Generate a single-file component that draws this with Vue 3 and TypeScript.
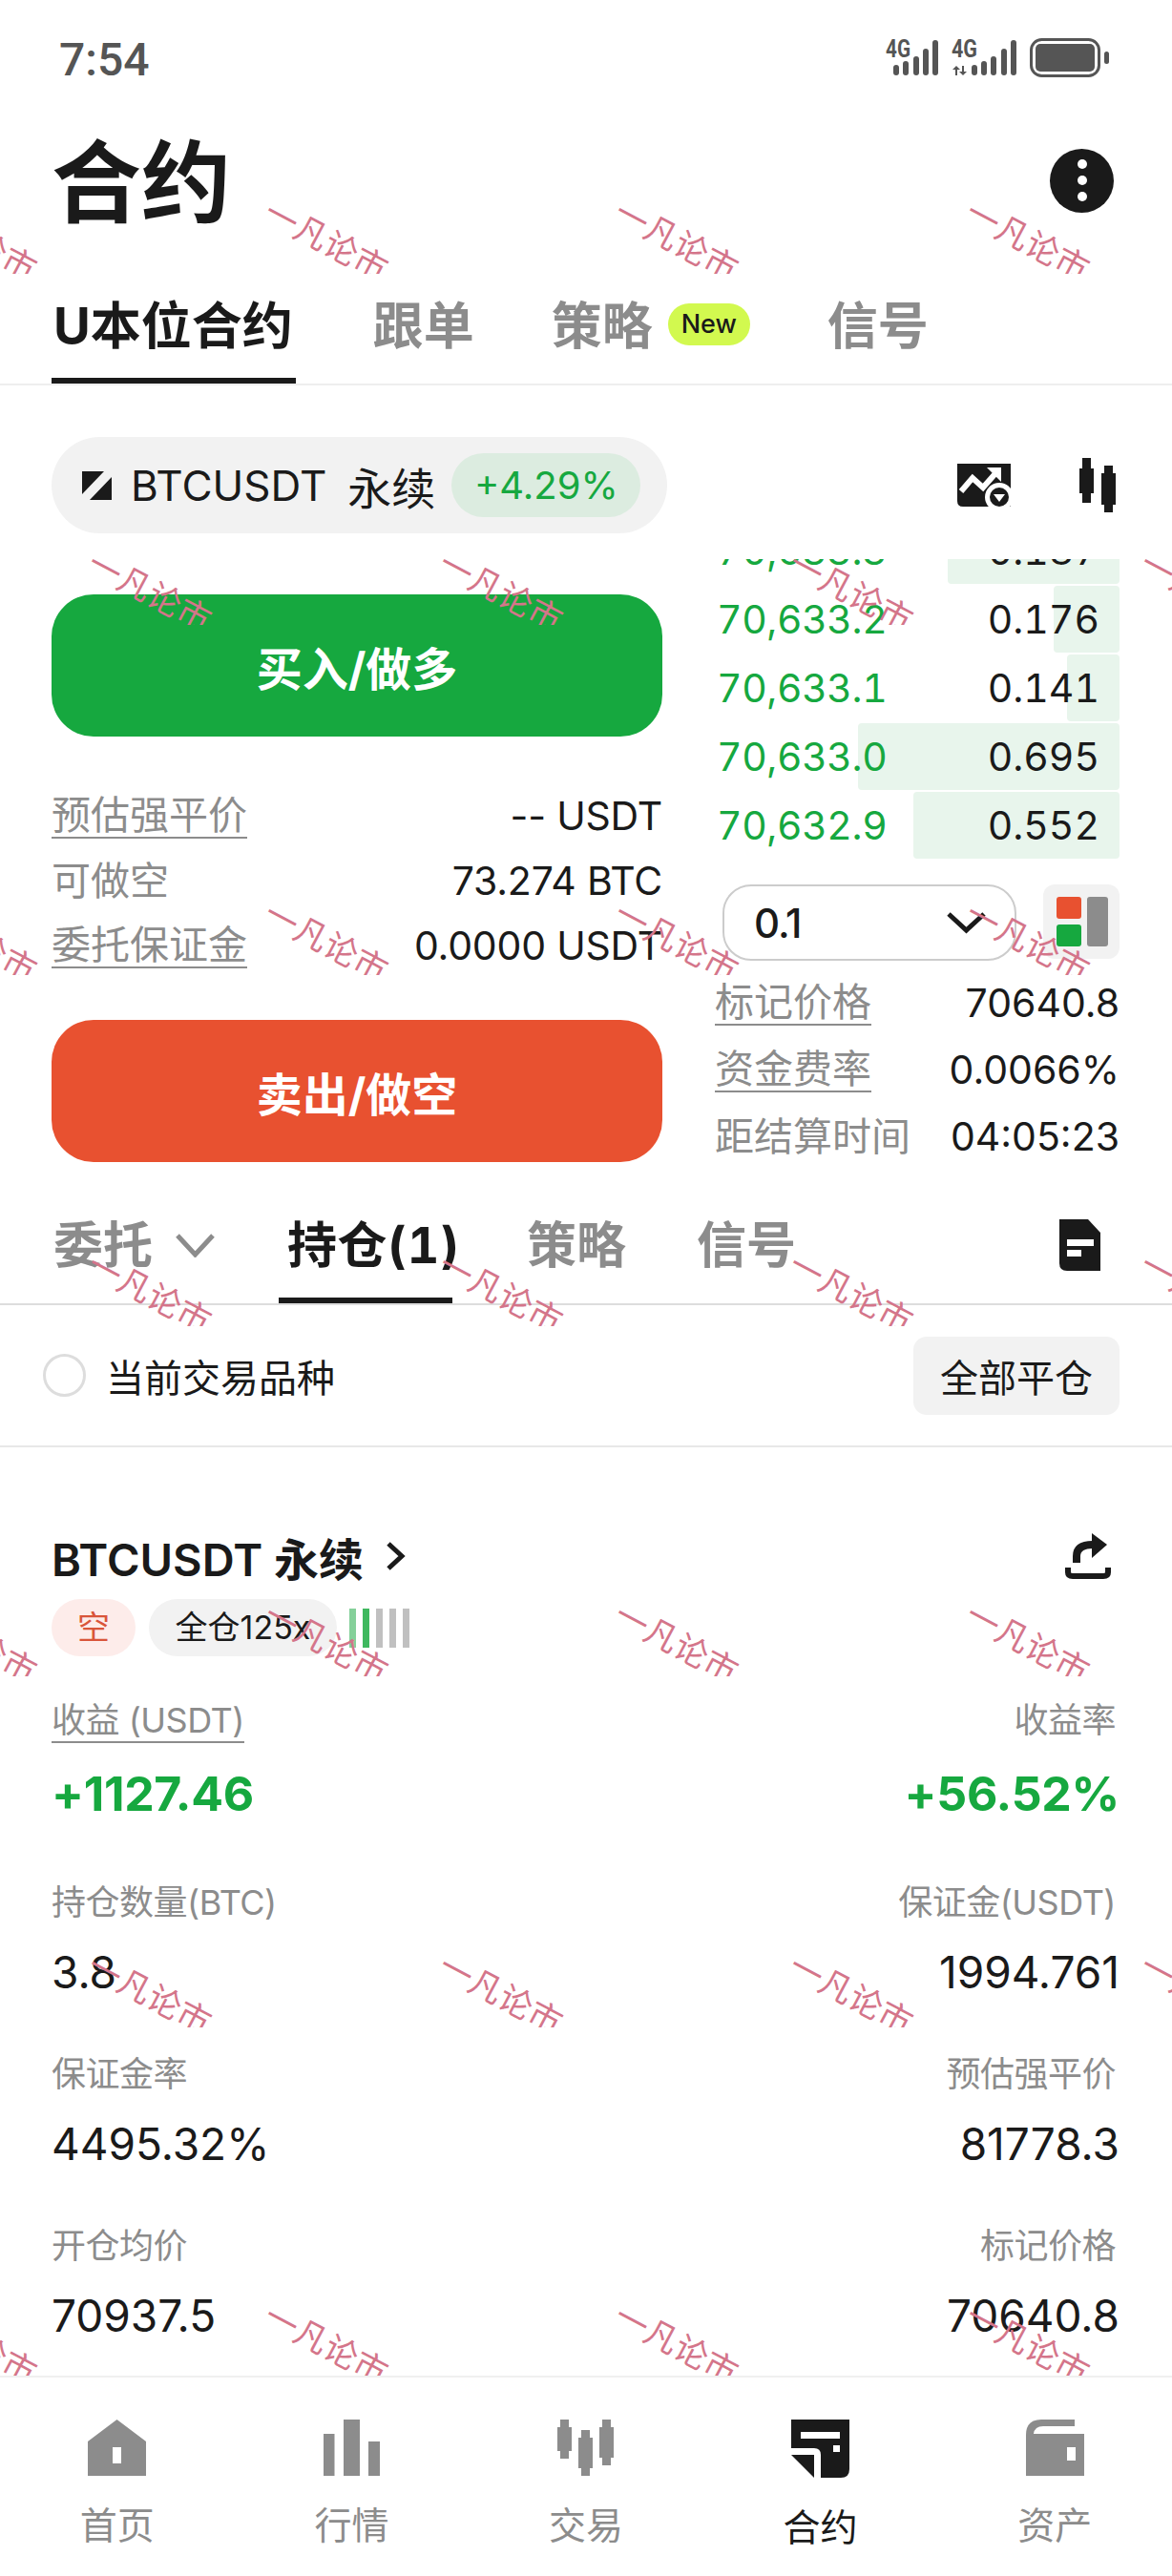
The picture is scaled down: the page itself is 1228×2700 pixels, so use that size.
<script setup lang="ts">
const topTabs = ['跟单']

const book = [
  { price: '70,633.3', qty: '0.187', bar: 180 },
  { price: '70,633.2', qty: '0.176', bar: 69 },
  { price: '70,633.1', qty: '0.141', bar: 55 },
  { price: '70,633.0', qty: '0.695', bar: 274 },
  { price: '70,632.9', qty: '0.552', bar: 216 },
]

const market = [
  { label: '标记价格', value: '70640.8', dotted: true },
  { label: '资金费率', value: '0.0066%', dotted: true },
  { label: '距结算时间', value: '04:05:23', dotted: false },
]

const stats = [
  { left: '持仓数量(BTC)', leftValue: '3.8', right: '保证金(USDT)', rightValue: '1994.761' },
  { left: '保证金率', leftValue: '4495.32%', right: '预估强平价', rightValue: '81778.3' },
  { left: '开仓均价', leftValue: '70937.5', right: '标记价格', rightValue: '70640.8' },
]

const riskBars = ['#85d09a', '#3fb85f', '#c0c0c0', '#c0c0c0', '#c0c0c0']

const navItems = [
  { label: '首页', icon: 'home', active: false },
  { label: '行情', icon: 'market', active: false },
  { label: '交易', icon: 'trade', active: false },
  { label: '合约', icon: 'contract', active: true },
  { label: '资产', icon: 'wallet', active: false },
]

// repeating watermark, every other row is shifted sideways
const marks: { left: number; top: number }[] = []
for (let row = 0; row < 7; row++) {
  const startX = row % 2 === 0 ? -89 : 94
  for (let col = 0; col < 4; col++) {
    marks.push({ left: startX + col * 367.5, top: 218 + row * 367.5 })
  }
}
</script>

<template>
  <div class="page">
    <header class="status">
      <span class="time">7:54</span>
      <svg class="status-icons" viewBox="928 40 234 41" width="234" height="41">
        <g fill="#555">
          <text x="928" y="60" class="net" textLength="26" lengthAdjust="spacingAndGlyphs">4G</text>
          <rect x="936" y="68" width="6" height="11" rx="3" />
          <rect x="946" y="64" width="6" height="15" rx="3" />
          <rect x="957" y="59" width="6" height="20" rx="3" />
          <rect x="967" y="51" width="6" height="28" rx="3" />
          <rect x="977" y="42" width="6" height="37" rx="3" />
          <text x="997" y="60" class="net" textLength="27" lengthAdjust="spacingAndGlyphs">4G</text>
          <path d="M1002 69l-4 4h3v6h2v-6h3zM1009 79l4-4h-3v-6h-2v6h-3z" />
          <rect x="1018" y="68" width="6" height="11" rx="3" />
          <rect x="1028" y="64" width="6" height="15" rx="3" />
          <rect x="1038" y="59" width="6" height="20" rx="3" />
          <rect x="1049" y="51" width="6" height="28" rx="3" />
          <rect x="1059" y="42" width="6" height="37" rx="3" />
          <rect x="1080.5" y="41.5" width="71" height="38" rx="11" fill="none" stroke="#555" stroke-width="3" />
          <rect x="1085" y="46" width="62" height="29" rx="5" />
          <rect x="1157" y="54" width="5" height="13" rx="2.5" />
        </g>
      </svg>
    </header>

    <div class="title-row">
      <h1 class="title">合约</h1>
      <div class="more"><i></i><i></i><i></i></div>
    </div>

    <nav class="tabs top-tabs">
      <div class="tab active first">U本位合约</div>
      <div v-for="t in topTabs" :key="t" class="tab">{{ t }}</div>
      <div class="tab with-badge">策略<span class="new">New</span></div>
      <div class="tab">信号</div>
    </nav>

    <section class="symbol-row">
      <div class="symbol">
        <svg class="logo" viewBox="0 0 31 30" width="31" height="30">
          <path d="M0 0H23L0 24ZM31 6V30H8Z" fill="#1a1a1a" />
        </svg>
        <span class="sym-name">BTCUSDT</span>
        <span class="sym-kind">永续</span>
        <span class="change">+4.29%</span>
      </div>
      <div class="symbol-tools">
        <svg viewBox="0 0 56 45" width="56" height="45">
          <path d="M0 0H56V45H6Q0 45 0 39Z" fill="#1a1a1a" />
          <path d="M4 29L16 15L27 25L42 8" fill="none" stroke="#fff" stroke-width="6" />
          <path d="M31 4H46V19Z" fill="#fff" />
          <circle cx="44" cy="35" r="15" fill="#fff" />
          <circle cx="44" cy="35" r="10" fill="#1a1a1a" />
          <path d="M38 32H50L44 40Z" fill="#fff" />
        </svg>
        <svg viewBox="0 0 38 57" width="38" height="57">
          <path d="M3 0H12V11H15V37H12V47H3V37H0V11H3ZM26 8H35V16H38V49H35V57H26V49H23V16H26Z" fill="#1a1a1a" />
        </svg>
      </div>
    </section>

    <section class="trade">
      <div class="trade-left">
        <button class="action buy">买入/做多</button>
        <div class="info">
          <div class="info-row"><span class="lbl dotted">预估强平价</span><span>-- USDT</span></div>
          <div class="info-row"><span class="lbl">可做空</span><span>73.274 BTC</span></div>
          <div class="info-row"><span class="lbl dotted">委托保证金</span><span>0.0000 USDT</span></div>
        </div>
        <button class="action sell">卖出/做空</button>
      </div>

      <div class="trade-right">
        <div class="book">
          <div v-for="r in book" :key="r.price" class="book-row">
            <div class="book-bar" :style="{ width: r.bar + 'px' }"></div>
            <span class="book-price">{{ r.price }}</span>
            <span class="book-qty">{{ r.qty }}</span>
          </div>
        </div>
        <div class="depth-row">
          <div class="depth">
            <span>0.1</span>
            <svg viewBox="0 0 41 24" width="41" height="24">
              <path d="M2 3L20.500 20L39 3" fill="none" stroke="#1a1a1a" stroke-width="5" />
            </svg>
          </div>
          <div class="layout-btn">
            <div class="layout-col">
              <i class="red"></i>
              <i class="green"></i>
            </div>
            <i class="gray"></i>
          </div>
        </div>
        <div class="market">
          <div v-for="m in market" :key="m.label" class="info-row">
            <span class="lbl" :class="{ dotted: m.dotted }">{{ m.label }}</span>
            <span>{{ m.value }}</span>
          </div>
        </div>
      </div>
    </section>

    <nav class="tabs sub-tabs">
      <div class="tab">委托</div>
      <svg class="sub-chevron" viewBox="0 0 41 25" width="41" height="25">
        <path d="M2 2L20.500 22L39 2" fill="none" stroke="#8c8c8c" stroke-width="5" />
      </svg>
      <div class="tab active held">持仓(1)</div>
      <div class="tab strategy">策略</div>
      <div class="tab">信号</div>
      <svg class="doc" viewBox="0 0 43 54" width="43" height="54">
        <path d="M0 0H30L43 14V54H8Q0 54 0 46Z" fill="#1a1a1a" />
        <path d="M8 21H36V28H8ZM8 32H23V39H8Z" fill="#fff" />
      </svg>
    </nav>

    <div class="filter-row">
      <label class="filter"><span class="radio"></span>当前交易品种</label>
      <button class="close-all">全部平仓</button>
    </div>

    <section class="position">
      <div class="pos-head">
        <div class="pos-name">
          <span>BTCUSDT 永续</span>
          <svg viewBox="0 0 20 30" width="20" height="30">
            <path d="M2 2L16 15L2 28" fill="none" stroke="#1a1a1a" stroke-width="5" />
          </svg>
        </div>
        <svg viewBox="0 0 48 48" width="48" height="48">
          <path d="M3 36V41Q3 45 8 45H40Q45 45 45 41V36" fill="none" stroke="#1a1a1a" stroke-width="6" />
          <path d="M12 31V24Q12 12 29 12" fill="none" stroke="#1a1a1a" stroke-width="8" />
          <path d="M28 0L44 12L28 26Z" fill="#1a1a1a" />
        </svg>
      </div>

      <div class="pos-tags">
        <span class="tag short">空</span>
        <span class="tag margin">全仓125x</span>
        <div class="risk">
          <i v-for="(c, i) in riskBars" :key="i" :style="{ background: c }"></i>
        </div>
      </div>

      <div class="pnl-grid">
        <div class="cell">
          <span class="cell-label"><span class="dotted">收益 (USDT)</span></span>
          <span class="pnl">+1127.46</span>
        </div>
        <div class="cell right">
          <span class="cell-label">收益率</span>
          <span class="pnl">+56.52%</span>
        </div>
      </div>

      <div class="stat-grid">
        <template v-for="s in stats" :key="s.left">
          <div class="cell">
            <span class="cell-label">{{ s.left }}</span>
            <span class="cell-value">{{ s.leftValue }}</span>
          </div>
          <div class="cell right">
            <span class="cell-label">{{ s.right }}</span>
            <span class="cell-value">{{ s.rightValue }}</span>
          </div>
        </template>
      </div>
    </section>

    <footer class="bottom-nav">
      <div v-for="n in navItems" :key="n.label" class="nav-item" :class="{ active: n.active }">
        <svg v-if="n.icon === 'home'" viewBox="0 0 61 59" width="61" height="59">
          <path fill-rule="evenodd" d="M30.500 0L61 23V59H0V23ZM26 29V46H35V29Z" fill="#8c8c8c" />
        </svg>
        <svg v-else-if="n.icon === 'market'" viewBox="0 0 59 59" width="59" height="59">
          <path d="M0 15H11.500V59H0ZM21 0H38V59H21ZM47 23H59V59H47Z" fill="#8c8c8c" />
        </svg>
        <svg v-else-if="n.icon === 'trade'" viewBox="0 0 59 59" width="59" height="59">
          <path d="M3 0H12V8H15V33H12V41H3V33H0V8H3ZM25 11H34V19H37V51H34V59H25V51H22V19H25ZM47 0H56V8H59V40H56V48H47V40H44V8H47Z" fill="#8c8c8c" />
        </svg>
        <svg v-else-if="n.icon === 'contract'" viewBox="0 0 61 61" width="61" height="61">
          <path d="M0 0H61V52Q61 61 52 61H31V37Q31 30 24 30H0Z" fill="#1a1a1a" />
          <path d="M0 37H24V61Z" fill="#1a1a1a" />
          <path d="M10 13H51V20H10ZM44 27H51V34H44Z" fill="#fff" />
        </svg>
        <svg v-else viewBox="0 0 61 59" width="61" height="59">
          <path fill-rule="evenodd" d="M0 59V16Q0 0 16 0H51V7H18Q9 7 8 15H61V59ZM43 29V43H52V29Z" fill="#8c8c8c" />
        </svg>
        <span class="nav-label">{{ n.label }}</span>
      </div>
    </footer>

    <div class="watermarks">
      <div v-for="(m, i) in marks" :key="i" class="mark" :style="{ left: m.left + 'px', top: m.top + 'px' }">
        <span>一凡论市</span>
      </div>
    </div>
  </div>
</template>

<style scoped>
.page {
  position: relative;
  width: 1228px;
  height: 2700px;
  overflow: hidden;
  display: flex;
  flex-direction: column;
  background: #fff;
  color: #1a1a1a;
  font-family: Inter, "Noto Sans CJK SC", sans-serif;
}

/* ---- status bar ---- */
.status {
  height: 124px;
  flex-shrink: 0;
  display: flex;
  align-items: center;
  justify-content: space-between;
  padding: 0 66px 0 62px;
}

.time {
  font-family: Roboto, sans-serif;
  font-size: 48px;
  font-weight: 500;
  color: #555;
}

.status-icons {
  margin-top: -3px;
}

.net {
  font-family: Roboto, sans-serif;
  font-size: 25px;
  font-weight: 700;
}

/* ---- title ---- */
.title-row {
  height: 136px;
  flex-shrink: 0;
  display: flex;
  align-items: center;
  justify-content: space-between;
  padding: 0 61px 0 54px;
}

.title {
  margin: 0;
  font-size: 94px;
  line-height: 1;
  font-weight: 700;
}

.more {
  width: 67px;
  height: 67px;
  margin-top: -6px;
  border-radius: 50%;
  background: #1a1a1a;
  display: flex;
  flex-direction: column;
  align-items: center;
  justify-content: center;
  gap: 7px;
}

.more i {
  width: 10px;
  height: 10px;
  border-radius: 50%;
  background: #fff;
}

/* ---- tabs ---- */
.tabs {
  flex-shrink: 0;
  box-sizing: border-box;
  display: flex;
  align-items: flex-end;
  border-bottom: 2px solid #eee;
}

.tab {
  font-size: 52px;
  line-height: 72px;
  font-weight: 700;
  color: #8c8c8c;
  padding-bottom: 24px;
  white-space: nowrap;
}

.tab.active {
  color: #1a1a1a;
  padding-bottom: 18px;
  border-bottom: 6px solid #1a1a1a;
}

.top-tabs {
  height: 144px;
  padding-left: 54px;
  gap: 81px;
}

.top-tabs .tab {
  font-size: 53px;
}

.tab.first {
  padding-left: 2px;
  padding-right: 3px;
}

.with-badge {
  display: flex;
  align-items: flex-start;
  gap: 16px;
}

.new {
  margin-top: 12px;
  width: 86px;
  height: 44px;
  border-radius: 22px;
  background: #d2f94f;
  color: #1a1a1a;
  font-size: 27px;
  line-height: 44px;
  font-weight: 500;
  text-align: center;
}

/* ---- symbol ---- */
.symbol-row {
  flex-shrink: 0;
  display: flex;
  align-items: center;
  justify-content: space-between;
  margin-top: 54px;
  padding: 0 59px 0 54px;
}

.symbol {
  width: 645px;
  height: 101px;
  box-sizing: border-box;
  padding-left: 32px;
  border-radius: 51px;
  background: #f2f2f2;
  display: flex;
  align-items: center;
}

.sym-name {
  margin-left: 20px;
  font-size: 44px;
}

.sym-kind {
  margin-left: 22px;
  font-size: 46px;
}

.change {
  margin-left: 17px;
  width: 198px;
  height: 67px;
  border-radius: 34px;
  background: #dcece0;
  color: #16a83f;
  font-size: 40px;
  line-height: 67px;
  text-align: center;
}

.symbol-tools {
  display: flex;
  align-items: center;
  gap: 72px;
}

/* ---- trade ---- */
.trade {
  flex-shrink: 0;
  display: flex;
  margin-top: 27px;
  padding-left: 54px;
  gap: 55px;
}

.trade-left {
  width: 640px;
  padding-top: 37px;
}

.action {
  display: block;
  width: 100%;
  height: 149px;
  border: 0;
  border-radius: 44px;
  color: #fff;
  font-family: inherit;
  font-size: 48px;
  font-weight: 700;
}

.buy {
  background: #16a83f;
}

.sell {
  background: #e85130;
}

.info {
  margin: 49px 0 44px;
}

.info-row {
  height: 68px;
  display: flex;
  align-items: center;
  justify-content: space-between;
  font-size: 41px;
  white-space: nowrap;
}

.info .info-row {
  letter-spacing: -0.2px;
}

.lbl {
  color: #8c8c8c;
  line-height: 46px;
  letter-spacing: 0;
}

.dotted {
  border-bottom: 2px solid #8c8c8c;
}

.trade-right {
  width: 424px;
}

.book {
  height: 314px;
  overflow: hidden;
  display: flex;
  flex-direction: column;
  justify-content: flex-end;
  gap: 2px;
}

.book-row {
  position: relative;
  flex-shrink: 0;
  height: 70px;
  padding: 0 21px 0 2px;
  display: flex;
  align-items: center;
  justify-content: space-between;
  font-size: 41px;
  font-variant-numeric: tabular-nums;
}

.book-bar {
  position: absolute;
  top: 0;
  right: 0;
  bottom: 0;
  background: #e8f5ec;
  border-radius: 4px;
}

.book-price,
.book-qty {
  position: relative;
}

.book-price {
  color: #16a83f;
  letter-spacing: -0.4px;
}

.depth-row {
  display: flex;
  justify-content: space-between;
  margin: 27px 0 9px 8px;
}

.depth {
  width: 308px;
  height: 80px;
  box-sizing: border-box;
  padding: 0 30px 0 31px;
  border: 2px solid #ccc;
  border-radius: 30px;
  display: flex;
  align-items: center;
  justify-content: space-between;
  font-size: 42px;
  font-weight: 500;
  letter-spacing: -1px;
}

.layout-btn {
  width: 80px;
  height: 78px;
  box-sizing: border-box;
  padding: 13px 12px 13px 14px;
  border-radius: 12px;
  background: #f2f2f2;
  display: flex;
  gap: 6px;
}

.layout-col {
  width: 26px;
  display: flex;
  flex-direction: column;
  gap: 6px;
}

.layout-btn i {
  display: block;
  border-radius: 3px;
}

.layout-col i {
  flex: 1;
}

.red {
  background: #e85130;
}

.green {
  background: #16a83f;
}

.gray {
  width: 22px;
  background: #8c8c8c;
}

.market .info-row {
  height: 70px;
}

/* ---- position tabs ---- */
.sub-tabs {
  height: 142px;
  padding: 0 75px 0 56px;
  border-bottom-color: #ddd;
}

.sub-chevron {
  margin: 0 67px 48px 24px;
}

.held {
  width: 182px;
  box-sizing: border-box;
  padding-left: 9px;
  margin-right: 78px;
  font-variant-numeric: tabular-nums;
  letter-spacing: 0.5px;
}

.strategy {
  margin-right: 74px;
}

.doc {
  margin: 0 0 34px auto;
}

.filter-row {
  flex-shrink: 0;
  height: 149px;
  box-sizing: border-box;
  padding: 0 55px 0 45px;
  border-bottom: 2px solid #e8e8e8;
  display: flex;
  align-items: center;
  justify-content: space-between;
}

.filter {
  display: flex;
  align-items: center;
  gap: 21px;
  font-size: 40px;
}

.radio {
  width: 45px;
  height: 45px;
  box-sizing: border-box;
  border: 3px solid #ddd;
  border-radius: 50%;
}

.close-all {
  width: 216px;
  height: 82px;
  border: 0;
  border-radius: 14px;
  background: #f2f2f2;
  color: #1a1a1a;
  font-family: inherit;
  font-size: 40px;
}

/* ---- position card ---- */
.position {
  flex: 1;
  min-height: 0;
  padding: 84px 55px 0 54px;
}

.pos-head {
  height: 60px;
  padding-right: 9px;
  display: flex;
  align-items: center;
  justify-content: space-between;
}

.pos-name {
  display: flex;
  align-items: center;
  gap: 24px;
  font-size: 47px;
  font-weight: 600;
}

.pos-tags {
  margin-top: 15px;
  display: flex;
  align-items: center;
}

.tag {
  height: 60px;
  border-radius: 30px;
  font-size: 34px;
  line-height: 60px;
  text-align: center;
}

.short {
  width: 88px;
  background: #fdecea;
  color: #d9553a;
}

.margin {
  width: 197px;
  margin-left: 14px;
  background: #f2f2f2;
}

.risk {
  display: flex;
  gap: 7px;
  margin-left: 13px;
}

.risk i {
  width: 7px;
  height: 41px;
}

.pnl-grid,
.stat-grid {
  display: grid;
  grid-template-columns: 1fr 1fr;
}

.pnl-grid {
  margin-top: 42px;
}

.stat-grid {
  margin-top: 54px;
  row-gap: 47px;
}

.cell {
  display: flex;
  flex-direction: column;
  align-items: flex-start;
}

.cell.right {
  align-items: flex-end;
}

.cell-label {
  font-size: 36px;
  line-height: 50px;
  letter-spacing: -0.5px;
  color: #8c8c8c;
  white-space: nowrap;
}

.cell.right .cell-label {
  padding-right: 4px;
}

.pnl {
  margin-top: 17px;
  font-size: 50px;
  line-height: 70px;
  font-weight: 700;
  letter-spacing: -0.3px;
  color: #16a83f;
}

.cell-value {
  margin-top: 13px;
  font-size: 46px;
  line-height: 70px;
}

/* ---- bottom nav ---- */
.bottom-nav {
  flex-shrink: 0;
  height: 210px;
  box-sizing: border-box;
  border-top: 2px solid #f0f0f0;
  display: grid;
  grid-template-columns: repeat(5, 1fr);
}

.nav-item {
  display: flex;
  flex-direction: column;
  align-items: center;
  padding-top: 44px;
  color: #8c8c8c;
}

.nav-item.active {
  color: #1a1a1a;
}

.nav-label {
  margin-top: 29px;
  font-size: 39px;
  line-height: 46px;
}

/* ---- watermark ---- */
.watermarks {
  position: absolute;
  top: 0;
  left: 0;
  right: 0;
  height: 2490px;
  overflow: hidden;
  pointer-events: none;
}

.mark {
  position: absolute;
  width: 136px;
  height: 69px;
  overflow: hidden;
}

.mark span {
  position: absolute;
  left: -7px;
  top: 14px;
  transform: rotate(28deg);
  transform-origin: 50% 50%;
  font-size: 35px;
  line-height: 40px;
  color: #d4758a;
  white-space: nowrap;
}
</style>
